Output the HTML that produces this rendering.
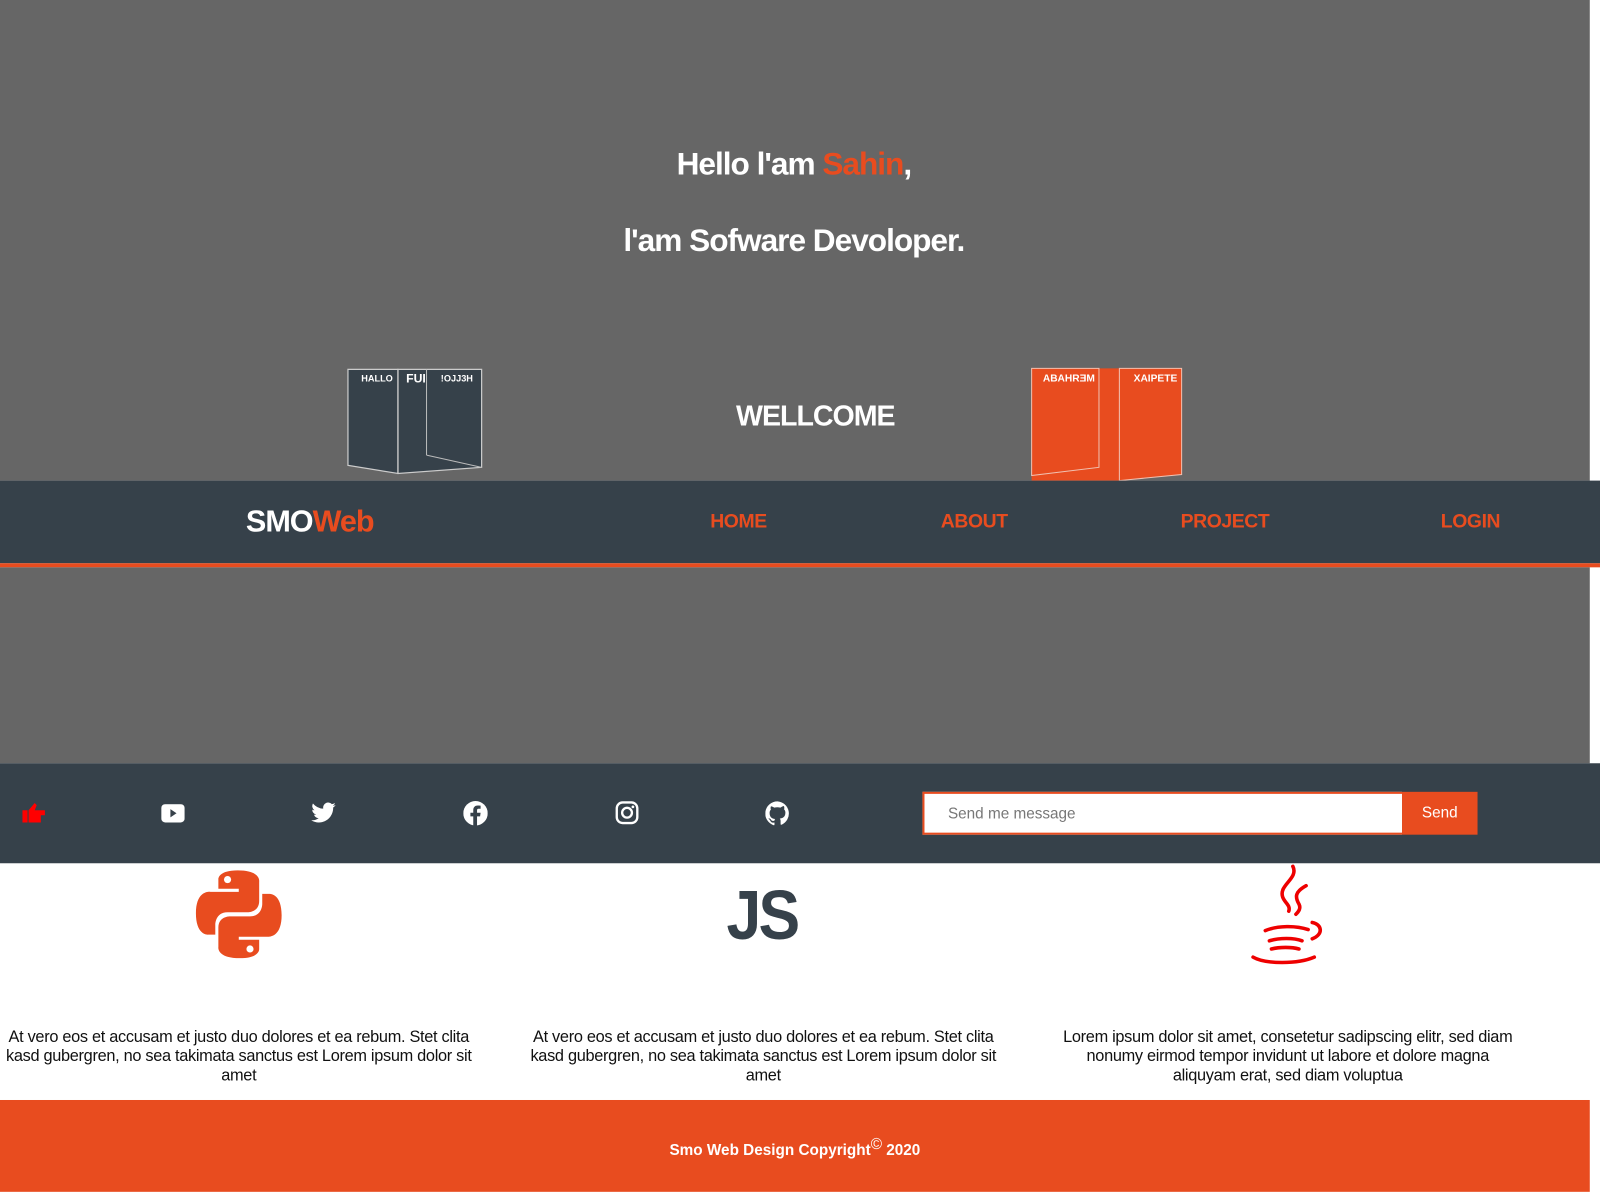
<!DOCTYPE html>
<html><head><meta charset="utf-8"><style>
*{margin:0;padding:0;box-sizing:border-box}
body{width:1600px;height:1192px;background:#fff;font-family:"Liberation Sans",sans-serif;position:relative;overflow:hidden}
#w{position:absolute;left:0;top:0;width:1568px;height:1168px;transform:scale(1.0204);transform-origin:0 0}
.abs{position:absolute}
.gray{background:#666;width:1558px;left:0}
.t{color:#fff;font-weight:bold;text-align:center;width:1556px;left:0}
.nav a{position:absolute;color:#e84c1f;font-weight:bold;font-size:19px;top:30px;text-decoration:none;letter-spacing:-0.4px}
.p{font-size:16px;letter-spacing:-0.3px;color:#111;text-align:center;line-height:19px;position:absolute;top:1007px}
</style></head><body><div id="w">
<div class="abs gray" style="top:0;height:471px"></div>
<div class="abs t" style="top:143px;font-size:31px;letter-spacing:-1px">Hello l'am <span style="color:#e84c1f">Sahin</span>,</div>
<div class="abs t" style="top:218px;font-size:31px;letter-spacing:-1px">l'am Sofware Devoloper.</div>
<div class="abs t" style="top:392px;font-size:28px;left:10px;width:1578px;letter-spacing:-1px">WELLCOME</div>
<svg class="abs" style="left:340px;top:360px" width="135" height="108">
<polygon points="1,2 132,2 132,98 50,104 1,96" fill="#36414a"/>
<polygon points="1,2 50,2 50,104 1,96" fill="none" stroke="#ccc" stroke-width="1.2"/>
<polygon points="50,2 132,2 132,98 50,104" fill="none" stroke="#ccc" stroke-width="1.2"/>
<line x1="78" y1="2" x2="78" y2="86" stroke="#bbb"/><line x1="78" y1="86" x2="132" y2="98" stroke="#bbb"/>
<text x="14" y="14" font-size="9" fill="#fff" font-weight="bold">HALLO</text>
<text x="58" y="15" font-size="12" fill="#fff" font-weight="bold">FUI</text>
<text x="92" y="14" font-size="9" fill="#fff" font-weight="bold">!OJJ3H</text>
</svg>
<svg class="abs" style="left:1010px;top:360px" width="150" height="112">
<polygon points="1,1 148,1 148,105 88,111 1,111" fill="#e84c1f"/>
<polygon points="1,1 67,1 67,98 1,106" fill="none" stroke="#f1c0b0"/>
<polygon points="87,1 148,1 148,105 87,111" fill="none" stroke="#f1c0b0"/>
<text x="12" y="14" font-size="10" fill="#fff" font-weight="bold">ABAHRƎM</text>
<text x="101" y="14" font-size="10" fill="#fff" font-weight="bold">XAIPETE</text>
</svg>
<div class="abs nav" style="top:471px;left:0;width:1600px;height:81px;background:#36414a">
<div class="abs" style="left:241px;top:24px;font-size:30px;font-weight:bold;color:#fff;letter-spacing:-1px">SMO<span style="color:#e84c1f">Web</span></div>
<a style="left:696px">HOME</a><a style="left:922px">ABOUT</a><a style="left:1157px">PROJECT</a><a style="left:1412px">LOGIN</a>
</div>
<div class="abs" style="top:552px;left:0;width:1600px;height:4px;background:#e84c1f"></div>
<div class="abs gray" style="top:556px;height:192px"></div>
<div class="abs" style="top:748px;left:0;width:1600px;height:98px;background:#36414a">
<svg class="abs" style="left:20px;top:38px" width="26" height="22" viewBox="0 0 26 22"><path d="M2 8h5v12H2zM8 8l6-7 2 2-2 5h10v5h-4v7H8z" fill="#f00"/></svg>
<svg class="abs" style="left:158px;top:40px" width="23" height="18" viewBox="0 0 23 18"><rect width="23" height="18" rx="4" fill="#fff"/><path d="M9 5l6 4-6 4z" fill="#36414a"/></svg>
<svg class="abs" style="left:305px;top:38px" width="24" height="21" viewBox="0 0 24 20"><path d="M24 2.4a10 10 0 0 1-2.8.8A5 5 0 0 0 23.3.4a10 10 0 0 1-3.1 1.2A4.9 4.9 0 0 0 11.8 6 14 14 0 0 1 1.7.9a4.9 4.9 0 0 0 1.5 6.6 4.9 4.9 0 0 1-2.2-.6 4.9 4.9 0 0 0 3.9 4.9 4.9 4.9 0 0 1-2.2.1 4.9 4.9 0 0 0 4.6 3.4A9.9 9.9 0 0 1 0 17.3 14 14 0 0 0 7.5 19.5c9 0 14-7.5 14-14v-.6A10 10 0 0 0 24 2.4z" fill="#fff"/></svg>
<svg class="abs" style="left:454px;top:37px" width="24" height="24" viewBox="0 0 24 24"><circle cx="12" cy="12" r="12" fill="#fff"/><path d="M13.5 24V15h3l.5-3.5h-3.5V9.3c0-1 .3-1.7 1.8-1.7H17V4.5a25 25 0 0 0-2.7-.1c-2.7 0-4.5 1.6-4.5 4.6v2.5H7V15h2.8v9z" fill="#36414a"/></svg>
<svg class="abs" style="left:603px;top:37px" width="23" height="23" viewBox="0 0 24 24"><rect x="1.5" y="1.5" width="21" height="21" rx="6" fill="none" stroke="#fff" stroke-width="2.4"/><circle cx="12" cy="12" r="5" fill="none" stroke="#fff" stroke-width="2.4"/><circle cx="18" cy="6" r="1.4" fill="#fff"/></svg>
<svg class="abs" style="left:750px;top:37px" width="24" height="24" viewBox="0 0 24 24"><path d="M12 .3a12 12 0 0 0-3.8 23.4c.6.1.8-.3.8-.6v-2c-3.3.7-4-1.6-4-1.6-.6-1.4-1.4-1.8-1.4-1.8-1-.7.1-.7.1-.7 1.2.1 1.8 1.2 1.8 1.2 1 1.8 2.8 1.3 3.5 1 0-.8.4-1.3.7-1.6-2.7-.3-5.5-1.3-5.5-6 0-1.2.5-2.3 1.3-3.1-.2-.4-.6-1.6 0-3.2 0 0 1-.3 3.3 1.2a11.5 11.5 0 0 1 6 0C17.3 4.6 18.3 5 18.3 5c.6 1.6.2 2.8.1 3.2.8.8 1.3 1.9 1.3 3.1 0 4.6-2.8 5.6-5.5 5.9.4.4.8 1.1.8 2.2v3.3c0 .3.2.7.8.6A12 12 0 0 0 12 .3" fill="#fff"/></svg>
<div class="abs" style="left:904px;top:28px;width:470px;height:42px;background:#fff;border:2px solid #e84c1f;border-right:none;color:#777;font-size:15px;padding:11px 0 0 23px">Send me message</div>
<div class="abs" style="left:1374px;top:28px;width:74px;height:42px;background:#e84c1f;color:#fff;font-size:15px;text-align:center;line-height:42px">Send</div>
</div>
<svg class="abs" style="left:190px;top:852px" width="88" height="88" viewBox="0 0 88 88">
<path d="M43 1c-20 0-19 9-19 9v9h20v3H16S2 20 2 43c0 22 12 21 12 21h7V54s0-12 12-12h20s11 0 11-11V12S66 1 43 1z" fill="#e84c1f"/>
<path d="M45 87c20 0 19-9 19-9v-9H44v-3h28s14 2 14-21c0-22-12-21-12-21h-7v10s0 12-12 12H35s-11 0-11 11v19S22 87 45 87z" fill="#e84c1f"/>
<circle cx="33" cy="10" r="3.5" fill="#fff"/><circle cx="55" cy="78" r="3.5" fill="#fff"/></svg>
<div class="abs" style="left:712px;top:858px;font-size:68px;font-weight:bold;color:#36414a;letter-spacing:-3px;transform:scaleX(0.9);transform-origin:left">JS</div>
<svg class="abs" style="left:1222px;top:846px" width="82" height="102" viewBox="0 0 82 102">
<g fill="none" stroke="#e00" stroke-width="3.5" stroke-linecap="round">
<path d="M45 3c6 12-14 18-10 30 2 6 8 8 6 14"/>
<path d="M58 22c-11 6-11 11-7 18 2 4 0 7-3 10"/>
<path d="M18 66c12-5 30-5 42-1"/>
<path d="M22 76c10-3 24-3 32 0"/>
<path d="M24 84c8-2 20-2 27 0"/>
<path d="M6 92c12 7 44 7 60 0"/>
<path d="M64 58c10 2 11 12 0 16"/>
</g></svg>
<div class="p" style="left:-4px;width:476px">At vero eos et accusam et justo duo dolores et ea rebum. Stet clita kasd gubergren, no sea takimata sanctus est Lorem ipsum dolor sit amet</div>
<div class="p" style="left:510px;width:476px">At vero eos et accusam et justo duo dolores et ea rebum. Stet clita kasd gubergren, no sea takimata sanctus est Lorem ipsum dolor sit amet</div>
<div class="p" style="left:1032px;width:460px">Lorem ipsum dolor sit amet, consetetur sadipscing elitr, sed diam nonumy eirmod tempor invidunt ut labore et dolore magna aliquyam erat, sed diam voluptua</div>
<div class="abs" style="top:1078px;left:0;width:1558px;height:90px;background:#e84c1f;color:#fff;font-weight:bold;font-size:15px;text-align:center;padding-top:35px">Smo Web Design Copyright<sup style="font-weight:normal;font-size:15px">©</sup> 2020</div>
</div></body></html>
